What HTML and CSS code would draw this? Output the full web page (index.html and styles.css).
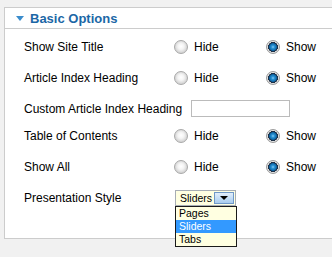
FILE: index.html
```html
<!DOCTYPE html>
<html lang="en">
<head>
    <meta charset="UTF-8">
    <title>Basic Options</title>
    <link rel="stylesheet" href="styles.css">
</head>
<body>

    <!-- Options panel -->
    <div class="panel">
        <div class="panel-head"><span class="toggle"></span>Basic Options</div>
        <div class="panel-body">
            <div class="row">
                <span class="label">Show Site Title</span>
                <label class="choice"><input type="radio" name="title">Hide</label>
                <label class="choice"><input type="radio" name="title" checked>Show</label>
            </div>
            <div class="row">
                <span class="label">Article Index Heading</span>
                <label class="choice"><input type="radio" name="heading">Hide</label>
                <label class="choice"><input type="radio" name="heading" checked>Show</label>
            </div>
            <div class="row row-text">
                <span class="label label-auto">Custom Article Index Heading</span>
                <input type="text" class="text-input">
            </div>
            <div class="row">
                <span class="label">Table of Contents</span>
                <label class="choice"><input type="radio" name="toc">Hide</label>
                <label class="choice"><input type="radio" name="toc" checked>Show</label>
            </div>
            <div class="row">
                <span class="label">Show All</span>
                <label class="choice"><input type="radio" name="all">Hide</label>
                <label class="choice"><input type="radio" name="all" checked>Show</label>
            </div>
            <div class="row">
                <span class="label">Presentation Style</span>
                <div class="select-wrap">
                    <div class="select">
                        <span class="select-value">Sliders</span>
                        <span class="select-btn"></span>
                    </div>
                    <ul class="select-list">
                        <li>Pages</li>
                        <li class="active">Sliders</li>
                        <li>Tabs</li>
                    </ul>
                </div>
            </div>
        </div>
    </div>

</body>
</html>
```

FILE: styles.css
```css
* {
    margin: 0;
    padding: 0;
    box-sizing: border-box;
}

body {
    min-height: 100vh;
    padding: 7px 0 0 4px;
    background-color: #f1f1f1;
    font-family: 'Liberation Sans', Arial, sans-serif;
    font-size: 12px;
    color: #000;
}

.panel {
    width: 328px;
    background-color: #fff;
    border: 1px solid #cccccc;
    border-right: none;
}

.panel-head {
    display: flex;
    align-items: center;
    height: 21px;
    padding-left: 11px;
    border-bottom: 1px solid #cccccc;
    font-size: 13px;
    font-weight: bold;
    color: #1b67a6;
}

.toggle {
    width: 0;
    height: 0;
    margin: 1px 6px 0 0;
    border-left: 4px solid transparent;
    border-right: 4px solid transparent;
    border-top: 5px solid #3a8ccc;
}

.panel-body {
    padding: 2px 0 25px 19px;
}

.row {
    display: flex;
    align-items: center;
    height: 31px;
}

.row > * {
    flex-shrink: 0;
}

.row-text {
    height: 27px;
    padding-top: 4px;
}

.label {
    width: 150px;
}

.label-auto {
    width: auto;
    margin-right: 9px;
}

/* Radio choices */
.choice {
    display: flex;
    align-items: center;
    width: 92px;
}

.choice:last-child {
    width: auto;
}

.choice input {
    appearance: none;
    -webkit-appearance: none;
    width: 14px;
    height: 14px;
    margin: 0 6px 0 0;
    border-radius: 50%;
    border: 1px solid #a8a8a8;
    background: radial-gradient(circle at 50% 45%, #ffffff 0, #f4f4f4 3px, #d6d6d6 6px);
}

.choice input:checked {
    border-color: #9c9c9c;
    background: radial-gradient(circle at 50% 50%,
        #8ccdf5 0, #2c95d6 1.5px, #0d67a8 3.5px, #1d2f45 4.2px, #1d2f45 4.8px,
        #f2f2f2 5.2px, #d2d2d2 6px);
}

.text-input {
    width: 99px;
    height: 17px;
    border: 1px solid #bbbbbb;
    background-color: #fff;
}

/* Select with open list */
.select-wrap {
    position: relative;
    margin-left: 1px;
}

.select {
    display: flex;
    align-items: center;
    width: 61px;
    height: 16px;
    padding: 1px;
    border: 1px solid #a7adb4;
    background-color: #ffffe1;
}

.select-value {
    flex: 1;
    padding-left: 3px;
    font-size: 10.5px;
    line-height: 12px;
}

.select-btn {
    display: flex;
    align-items: center;
    justify-content: center;
    width: 20px;
    height: 12px;
    border: 1px solid #6f98c8;
    background: linear-gradient(#e2eefb, #a8ccef);
}

.select-btn::after {
    content: '';
    border-left: 4px solid transparent;
    border-right: 4px solid transparent;
    border-top: 4px solid #000;
}

.select-list {
    position: absolute;
    z-index: 1;
    top: 16px;
    left: 0;
    width: 62px;
    list-style: none;
    border: 1px solid #1a1a1a;
    background-color: #ffffe1;
    font-size: 10.5px;
}

.select-list li {
    height: 13px;
    line-height: 13px;
    padding-left: 3px;
}

.select-list .active {
    background-color: #3399ff;
    color: #fff;
}
```
